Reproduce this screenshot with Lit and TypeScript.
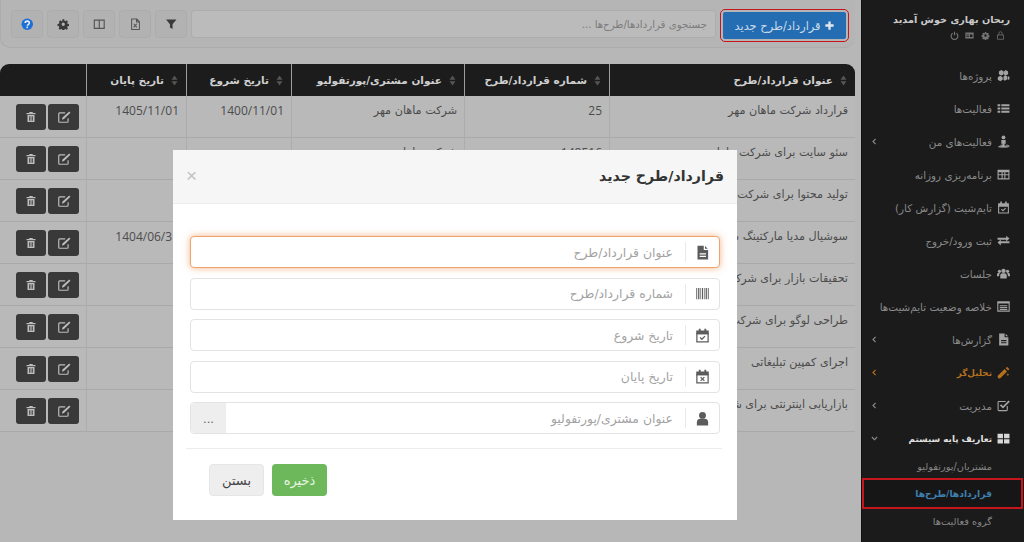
import { LitElement, html, css, svg } from "lit";
import { customElement } from "lit/decorators.js";

const I: Record<string, any> = {
  plus: svg`<path d="M9.500 3h5v6.500H21v5h-6.500V21h-5v-6.500H3v-5h6.500z"/>`,
  filter: svg`<path d="M2 3h20l-7.500 9v9l-5-3v-6z"/>`,
  excel: svg`<path fill="none" stroke="currentColor" stroke-width="2" d="M5 2h10l5 5v15H5zM14.500 2v5.500H20"/><path fill="none" stroke="currentColor" stroke-width="2" d="M9 11l6 7M15 11l-6 7"/>`,
  columns: svg`<path fill="none" stroke="currentColor" stroke-width="2.200" d="M2.500 4h19v16h-19zM12 4v16"/>`,
  gear: svg`<path fill-rule="evenodd" d="M10 1.500h4l.6 3 2 .9 2.600-1.700 2.800 2.800-1.700 2.600.9 2 3 .6v4l-3 .6-.9 2 1.700 2.600-2.800 2.800-2.600-1.700-2 .9-.6 3h-4l-.6-3-2-.9-2.600 1.700-2.800-2.800 1.700-2.600-.9-2-3-.6v-4l3-.6.9-2L2.800 6.500l2.800-2.800 2.600 1.700 2-.9zM12 8.500a3.500 3.500 0 100 7 3.500 3.500 0 000-7z" transform="translate(1.200 1.200) scale(.9)"/>`,
  help: svg`<circle cx="12" cy="12" r="11" fill="#1d6fd8"/><path fill="none" stroke="#e8eef8" stroke-width="3" d="M8 9.500C8 7 10 6 12 6s4 1.200 4 3.500c0 3-4 3-4 5.500"/><rect x="10.500" y="16.500" width="3" height="3" fill="#e8eef8"/>`,
  edit: svg`<path fill="none" stroke="currentColor" stroke-width="2" d="M19 14v5.500a1.500 1.500 0 01-1.500 1.500h-13A1.500 1.500 0 013 19.500v-13A1.500 1.500 0 014.500 5H14"/><path d="M21 2.500l2 2-11 11-3.500 1 1-3.500z"/>`,
  trash: svg`<path d="M9 2h6l1 2h5v2.500H3V4h5z"/><path fill-rule="evenodd" d="M5 8h14v14H5zM8.500 10.500v9h1.500v-9zM11.250 10.500v9h1.500v-9zM14 10.500v9h1.500v-9z"/>`,
  sort: svg`<path d="M12 1l6.500 9.500h-13zM12 23l-6.500-9.500h13z"/>`,
  file: svg`<path fill-rule="evenodd" d="M4 1h10v7h7v15H4zM7.500 13v2h10v-2zM7.500 17v2h10v-2z"/><path d="M16 1.500L20.500 6H16z"/>`,
  barcode: svg`<path d="M2 3h1.500v18H2zM5 3h2v18H5zM8.500 3h1v18h-1zM11 3h2v18h-2zM14.500 3h1v18h-1zM17 3h2v18h-2zM20.500 3H22v18h-1.500z"/>`,
  calCheck: svg`<path fill="none" stroke="currentColor" stroke-width="2" d="M3 9h18v13H3z"/><path d="M2 4h20v6H2zM6 1h3v5H6zM15 1h3v5h-3z"/><path fill="none" stroke="currentColor" stroke-width="2" d="M8 15l3 3 5-5"/>`,
  calX: svg`<path fill="none" stroke="currentColor" stroke-width="2" d="M3 9h18v13H3z"/><path d="M2 4h20v6H2zM6 1h3v5H6zM15 1h3v5h-3z"/><path fill="none" stroke="currentColor" stroke-width="2" d="M9 13l6 6M15 13l-6 6"/>`,
  user: svg`<circle cx="12" cy="7" r="5.500"/><path d="M3 23v-5c0-4 3-5.500 5-5.500h8c2 0 5 1.500 5 5.500v5z"/>`,
  cubes: svg`<path d="M8 2l4.500 2.500v5L8 12 3.500 9.500v-5zM16 2l4.500 2.500v5L16 12l-3-1.700V4.500zM6 12.500l4.500 2.500v5L6 22.500 1.500 20v-5zM14.500 11.500L19 14v5l-4.500 2.500L12 20v-5.500zM20 13l3 1.700v4l-3 1.500z"/>`,
  list: svg`<path d="M1 4h5v4H1zM8 4h15v4H8zM1 10h5v4H1zM8 10h15v4H8zM1 16h5v4H1zM8 16h15v4H8z"/>`,
  street: svg`<circle cx="12" cy="4.500" r="3.500"/><path d="M8 9h8v7h-2v6h-4v-6H8z"/><path d="M7 17.500v2c-3 .5-5 1-5 2s4.500 2 10 2 10-1 10-2-2-1.500-5-2v-2c4 .5 6.500 2 6.500 3.500" opacity=".85"/>`,
  table: svg`<path fill-rule="evenodd" d="M1 3h22v18H1zM3 8v3.500h5.500V8zM10.500 8v3.500h3V8zM15.500 8v3.500H21V8zM3 13.500V19h5.500v-5.500zM10.500 13.500V19h3v-5.500zM15.500 13.500V19H21v-5.500z"/>`,
  exchange: svg`<path d="M1 7h16V3l6 5.500L17 14v-3.500H1zM23 13.500H7V10l-6 5.500L7 21v-4h16z"/>`,
  group: svg`<circle cx="12" cy="7" r="4"/><circle cx="4.500" cy="8" r="3"/><circle cx="19.500" cy="8" r="3"/><path d="M6 21v-5c0-3 2-4.500 4-4.500h4c2 0 4 1.500 4 4.500v5zM0 17v-3c0-2 1-3 3-3h2.500C4.500 12 4 13.500 4 15v2zM24 17v-3c0-2-1-3-3-3h-2.500c1 1 1.500 2.500 1.500 4v2z"/>`,
  listalt: svg`<path fill="none" stroke="currentColor" stroke-width="2" d="M1.500 3.500h21v17h-21z"/><path d="M1.500 3.500h21v3h-21zM5 9.500h14v2H5zM5 13h14v2H5zM5 16.500h14v2H5z"/>`,
  magic: svg`<path d="M2 22.500l-1-4L14 5.500l4.500 4.500L5.500 23z"/><path d="M16 4l2.500-2.500 4.500 4.500-2.500 2.500z"/><path d="M20 13l1 2 2 1-2 1-1 2-1-2-2-1 2-1z" opacity=".8"/>`,
  check: svg`<path fill="none" stroke="currentColor" stroke-width="2" d="M19 13v7a1.500 1.500 0 01-1.500 1.500h-14A1.500 1.500 0 012 20V6a1.500 1.500 0 011.500-1.500H16"/><path fill="none" stroke="currentColor" stroke-width="3.200" d="M6.500 11l4.500 4.500L22.500 4"/>`,
  thlarge: svg`<path d="M1 3h10v8.500H1zM13 3h10v8.500H13zM1 13.500h10V21H1zM13 13.500h10V21H13z"/>`,
  power: svg`<path fill="none" stroke="currentColor" stroke-width="3" d="M7 6a9 9 0 1010 0M12 2v9"/>`,
  card: svg`<path fill-rule="evenodd" d="M1 4h22v16H1zM3.500 9v2.500h7V9zM3.500 14v2h7v-2zM13 9v7h7V9z"/>`,
  lock: svg`<path fill="none" stroke="currentColor" stroke-width="2" d="M4 10.500h16V22H4zM7.500 10.500V6.500a4.500 4.500 0 019 0v4"/>`,
  chevL: svg`<path fill="none" stroke="currentColor" stroke-width="3" d="M15 5l-7 7 7 7"/>`,
  chevD: svg`<path fill="none" stroke="currentColor" stroke-width="3" d="M5 8l7 7 7-7"/>`,
};

const icon = (n: string, cls = "") =>
  html`<svg class="ic ${cls}" viewBox="0 0 24 24" fill="currentColor" aria-hidden="true">${I[n]}</svg>`;

const rows = [
  ["قرارداد شرکت ماهان مهر", "25", "شرکت ماهان مهر", "1400/11/01", "1405/11/01"],
  ["سئو سایت برای شرکت ماهان مهر", "148516", "شرکت ماهان مهر", "", ""],
  ["تولید محتوا برای شرکت ماهان مهر", "", "", "", ""],
  ["سوشیال مدیا مارکتینگ شرکت ماهان", "", "", "", "1404/06/31"],
  ["تحقیقات بازار برای شرکت ماهان", "", "", "", ""],
  ["طراحی لوگو برای شرکت ماهان", "", "", "", ""],
  ["اجرای کمپین تبلیغاتی", "", "", "", ""],
  ["بازاریابی اینترنتی برای شرکت ماهان", "", "", "", ""],
];

const heads = ["عنوان قرارداد/طرح", "شماره قرارداد/طرح", "عنوان مشتری/پورتفولیو", "تاریخ شروع", "تاریخ پایان"];

const nav: { t: string; i: string; k?: string; c?: string }[] = [
  { t: "پروژه‌ها", i: "cubes" },
  { t: "فعالیت‌ها", i: "list" },
  { t: "فعالیت‌های من", i: "street", c: "chevL" },
  { t: "برنامه‌ریزی روزانه", i: "table" },
  { t: "تایم‌شیت (گزارش کار)", i: "calCheck" },
  { t: "ثبت ورود/خروج", i: "exchange" },
  { t: "جلسات", i: "group" },
  { t: "خلاصه وضعیت تایم‌شیت‌ها", i: "listalt" },
  { t: "گزارش‌ها", i: "file", c: "chevL" },
  { t: "تحلیل‌گر", i: "magic", c: "chevL", k: "orange" },
  { t: "مدیریت", i: "check", c: "chevL" },
  { t: "تعاریف پایه سیستم", i: "thlarge", c: "chevD", k: "white" },
];

const subs = [
  { t: "مشتریان/پورتفولیو", k: "" },
  { t: "قراردادها/طرح‌ها", k: "active" },
  { t: "گروه فعالیت‌ها", k: "" },
];

const fields = [
  { p: "عنوان قرارداد/طرح", i: "file", k: "focus" },
  { p: "شماره قرارداد/طرح", i: "barcode", k: "" },
  { p: "تاریخ شروع", i: "calCheck", k: "" },
  { p: "تاریخ پایان", i: "calX", k: "" },
  { p: "عنوان مشتری/پورتفولیو", i: "user", k: "more" },
];

@customElement("app-root")
export class AppRoot extends LitElement {
  static styles = css`
    :host {
      display: block;
      width: 1024px;
      height: 542px;
      position: relative;
      overflow: hidden;
      font-family: "DejaVu Sans", "Noto Sans", sans-serif;
      background: #b7b7b7;
    }
    .page { display: flex; height: 542px; direction: rtl; }
    .ic { width: 1em; height: 1em; display: block; flex: none; }

    aside { width: 163px; flex: none; background: #1b1b1b; color: #8a8a8a; border-left: 1px solid #111; box-sizing: border-box; overflow: hidden; }
    .who { padding: 13px 14px 0 0; height: 59px; box-sizing: border-box; }
    .who b { display: block; font-size: 9.700px; line-height: 13px; color: #c9c9c9; white-space: nowrap; }
    .who div { display: flex; gap: 6.500px; padding: 5px 5px 0 0; font-size: 9px; color: #757575; }
    .item { display: flex; align-items: center; height: 33px; padding: 0 14px 0 8px; font-size: 10.400px; white-space: nowrap; }
    .item .lead { font-size: 13px; margin-left: 5px; color: #a4a4a4; }
    .item .chev { font-size: 9px; margin-right: auto; color: #8a8a8a; }
    .item.orange { color: #b5701d; font-weight: 700; font-size: 8.800px; }
    .item.orange .lead, .item.orange .chev { color: #b5701d; }
    .item.white { color: #e0e0e0; font-weight: 700; font-size: 8.800px; }
    .item.white .lead { color: #d8d8d8; }
    .subs { margin-top: -1px; }
    .sub { height: 24px; display: flex; align-items: center; padding-right: 32px; font-size: 9.800px; color: #868686; white-space: nowrap; }
    .sub.active { height: 31px; margin: 0 1px; width: 161px; box-sizing: border-box; padding-right: 31px; color: #3f7fae; font-size: 9.200px; font-weight: 700; outline: 2px solid #c4161c; outline-offset: -2px; background: #161616; }

    main { flex: 1; min-width: 0; padding-right: 6px; }
    .bar { height: 48px; box-sizing: border-box; display: flex; gap: 4px; padding: 10px 9px 0 10px; background: #b5b5b5; border: 1px solid #ababab; border-top: 0; border-right: 0; border-radius: 0 0 10px 10px; }
    .new { width: 123px; height: 27px; margin: 2px 0 0 3px; box-sizing: border-box; flex: none; border-radius: 2px; background: #256db3; color: #c9dbe9; font-size: 11.400px; display: flex; align-items: center; justify-content: center; gap: 3px; outline: 1.500px solid #c4161c; outline-offset: 2px; white-space: nowrap; }
    .new .ic { font-size: 11px; color: #e0e8ef; }
    .search { flex: 1; height: 28px; background: #bbb; border: 1px solid #adadad; border-radius: 3px; box-sizing: border-box; font-size: 10.200px; color: #7c7c7c; display: flex; align-items: center; padding-right: 8px; }
    .tb { width: 32px; height: 28px; flex: none; background: #b2b2b2; border: 1px solid #acacac; border-radius: 4px; box-sizing: border-box; display: flex; align-items: center; justify-content: center; font-size: 12.500px; color: #3a3a3a; }
    .tb.thin { color: #555; }

    table { width: 855px; margin-top: 16px; border-collapse: separate; border-spacing: 0; table-layout: fixed; }
    .c1 { width: 246px; } .c2 { width: 145px; } .c3 { width: 173px; } .c4 { width: 105px; } .c5 { width: 100px; } .c6 { width: 86px; }
    th { height: 32px; box-sizing: border-box; background: #1c1c1c; color: #cfcfcf; font-size: 10.500px; font-weight: 700; border-left: 1px solid #9d9d9d; padding: 0 6px; text-align: right; white-space: nowrap; overflow: hidden; }
    th:first-child { border-top-right-radius: 9px; }
    th:last-child { border-top-left-radius: 9px; border-left: 0; }
    th span { display: flex; align-items: center; gap: 5px; }
    th .ic { font-size: 11px; color: #555; }
    td { height: 42px; box-sizing: border-box; background: #b9b9b9; border-bottom: 1px solid #a9a9a9; border-left: 1px solid #acacac; padding: 7px 7px 0; vertical-align: top; font-size: 11.200px; line-height: 16px; color: #4c4c4c; white-space: nowrap; overflow: hidden; }
    td:last-child { border-left: 0; padding: 8px 0 0 16px; }
    td.num { font-family: "Open Sans", sans-serif; font-size: 12px; line-height: 16px; padding-left: 0; }
    .acts { display: flex; direction: ltr; gap: 2px; }
    .act { width: 30px; height: 26px; flex: none; border-radius: 3px; background: #393939; color: #bdbdbd; display: flex; align-items: center; justify-content: center; font-size: 12px; }
    .act + .act { width: 31px; font-size: 14px; }

    .modal { position: absolute; left: 173px; top: 150px; width: 564px; height: 370px; background: #fff; direction: rtl; }
    .mh { height: 54px; box-sizing: border-box; background: #f6f6f6; border-bottom: 1px solid #ececec; display: flex; align-items: center; justify-content: space-between; padding: 0 13px 2px 13px; }
    .mh h2 { margin: 0; font-size: 14.200px; font-weight: 700; color: #333; }
    .mh span { font-family: "Liberation Sans", sans-serif; font-size: 19px; color: #c2c2c2; }
    .mb { padding: 32px 17px 0; display: flex; flex-direction: column; gap: 9.500px; }
    .f { height: 32px; box-sizing: border-box; border: 1px solid #e3e3e3; border-radius: 4px; display: flex; align-items: center; overflow: hidden; background: #fff; }
    .f.focus { border-color: #eea36b; box-shadow: 0 0 7px rgba(240, 150, 90, .7); overflow: visible; }
    .fi { width: 33px; height: 20px; flex: none; display: flex; align-items: center; justify-content: center; border-left: 1px solid #e8e8e8; font-size: 15px; color: #5c5c5c; }
    .fp { flex: 1; padding-right: 12px; font-size: 12.400px; color: #a3a3a3; white-space: nowrap; }
    .dots { width: 35px; align-self: stretch; background: #eee; display: flex; align-items: center; justify-content: center; font-family: "Liberation Sans", sans-serif; font-size: 13px; color: #666; }
    .mf { margin: 14px 15px 0 13px; border-top: 1px solid #ececec; padding: 15px 0 0 23px; display: flex; gap: 8px; justify-content: flex-start; direction: ltr; }
    .btn { width: 55px; height: 32px; border-radius: 4px; display: flex; align-items: center; justify-content: center; font-size: 13px; box-sizing: border-box; direction: rtl; }
    .close { background: #eee; color: #444; border: 1px solid #e6e6e6; }
    .save { background: #6cb85a; color: #e8f5e3; }
  `;

  render() {
    return html`
      <div class="page">
        <aside>
          <div class="who">
            <b>ریحان بهاری خوش آمدید</b>
            <div>${icon("lock")}${icon("gear")}${icon("card")}${icon("power")}</div>
          </div>
          ${nav.map((n) => html`
            <div class="item ${n.k ?? ""}">
              <span class="lead">${icon(n.i)}</span>
              <span>${n.t}</span>
              ${n.c ? html`<span class="chev">${icon(n.c)}</span>` : ""}
            </div>`)}
          <div class="subs">
            ${subs.map((s) => html`<div class="sub ${s.k}">${s.t}</div>`)}
          </div>
        </aside>
        <main>
          <div class="bar">
            <div class="new">${icon("plus")}<span>قرارداد/طرح جدید</span></div>
            <div class="search">جستجوی قراردادها/طرح‌ها ...</div>
            <div class="tb">${icon("filter")}</div>
            <div class="tb thin">${icon("excel")}</div>
            <div class="tb thin">${icon("columns")}</div>
            <div class="tb">${icon("gear")}</div>
            <div class="tb">${icon("help")}</div>
          </div>
          <table>
            <colgroup>
              <col class="c1" /><col class="c2" /><col class="c3" /><col class="c4" /><col class="c5" /><col class="c6" />
            </colgroup>
            <thead>
              <tr>
                ${heads.map((h) => html`<th><span>${icon("sort")}${h}</span></th>`)}
                <th></th>
              </tr>
            </thead>
            <tbody>
              ${rows.map((r) => html`
                <tr>
                  <td>${r[0]}</td>
                  <td class="num">${r[1]}</td>
                  <td>${r[2]}</td>
                  <td class="num">${r[3]}</td>
                  <td class="num">${r[4]}</td>
                  <td>
                    <div class="acts">
                      <div class="act">${icon("trash")}</div>
                      <div class="act">${icon("edit")}</div>
                    </div>
                  </td>
                </tr>`)}
            </tbody>
          </table>
        </main>
      </div>
      <section class="modal">
        <div class="mh">
          <h2>قرارداد/طرح جدید</h2>
          <span>×</span>
        </div>
        <div class="mb">
          ${fields.map((f) => html`
            <div class="f ${f.k}">
              <div class="fi">${icon(f.i)}</div>
              <div class="fp">${f.p}</div>
              ${f.k === "more" ? html`<div class="dots">...</div>` : ""}
            </div>`)}
        </div>
        <div class="mf">
          <div class="btn close">بستن</div>
          <div class="btn save">ذخیره</div>
        </div>
      </section>
    `;
  }
}
